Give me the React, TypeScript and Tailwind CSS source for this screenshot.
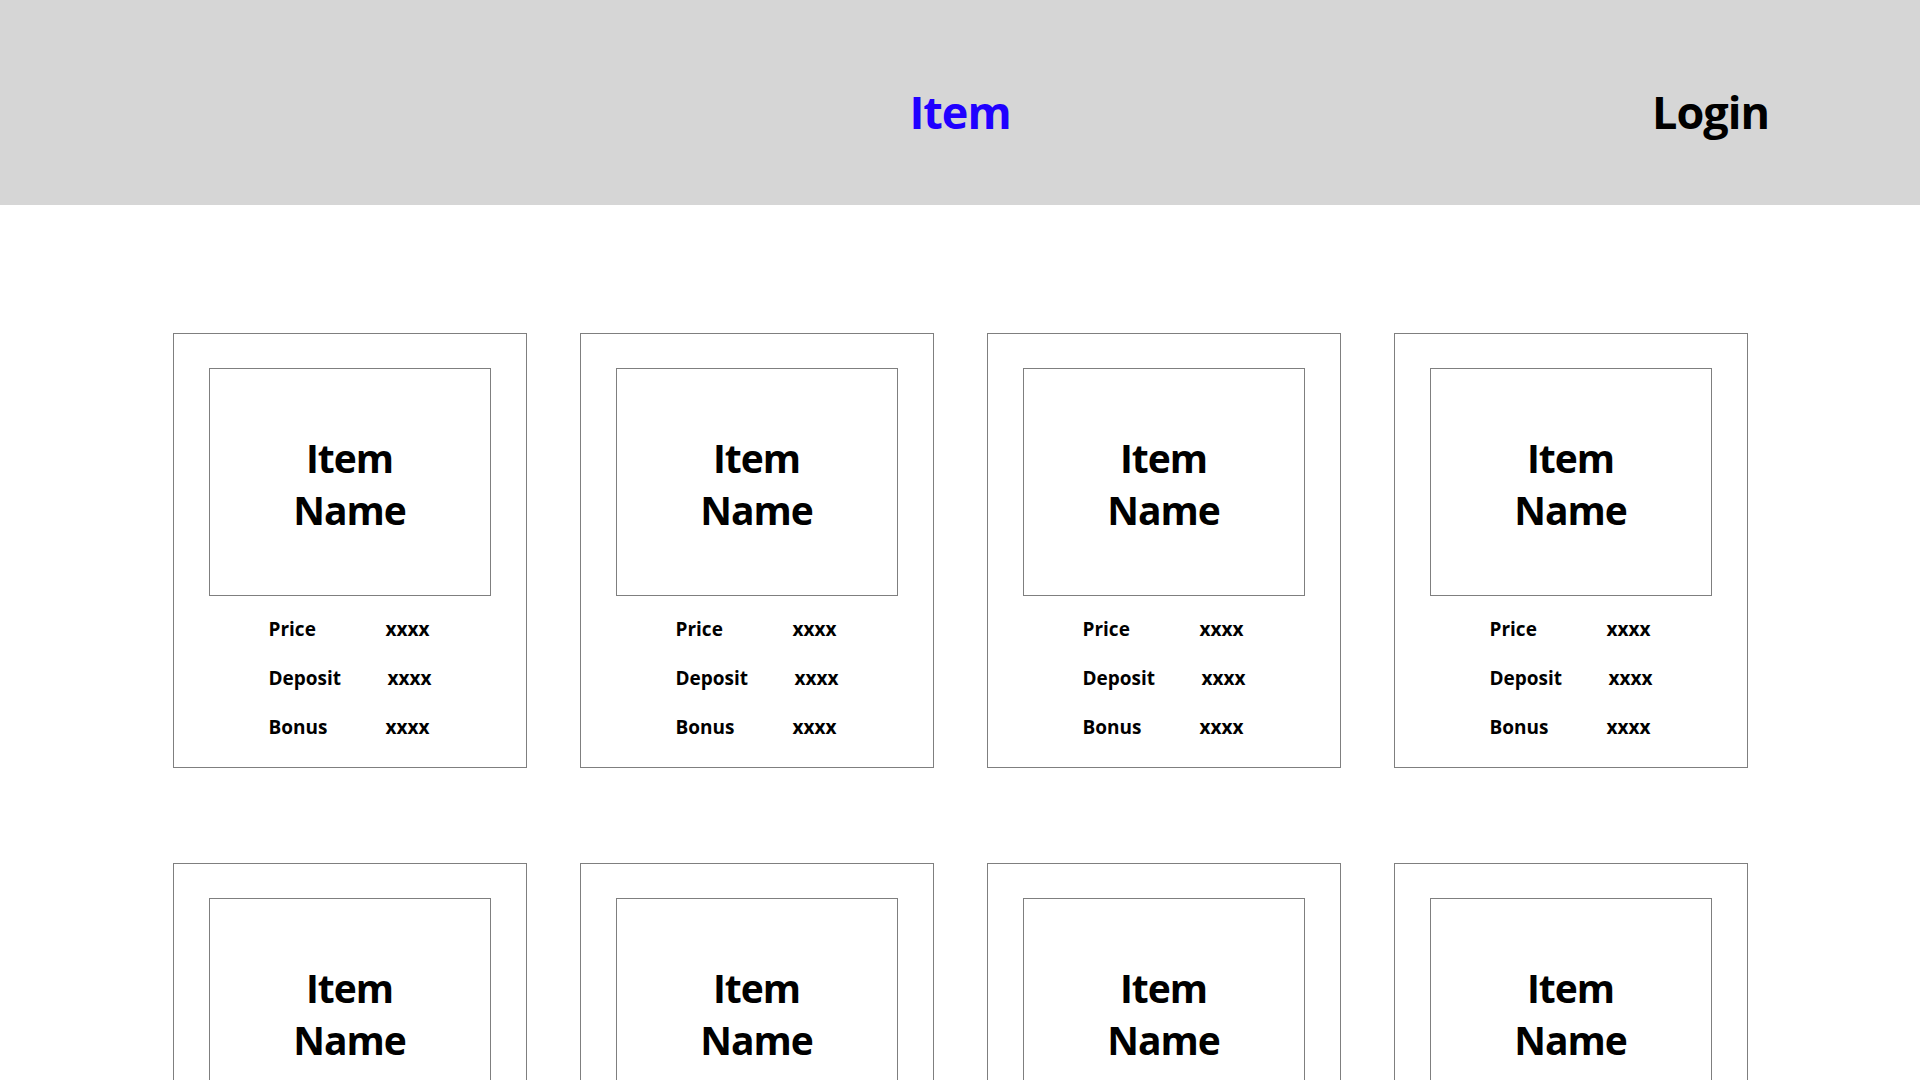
const items = Array.from({ length: 8 }, (_, i) => i);

function ItemCard() {
  return (
    <div className="w-[354px] h-[435px] border border-[#7f7f7f] px-[35px] pt-[34px]">
      <div className="w-[282px] h-[228px] border border-[#7f7f7f] flex items-center justify-center">
        <div className="pt-[4px] text-[39px] leading-[52px] tracking-[-1px] font-bold text-center text-black">
          Item
          <br />
          Name
        </div>
      </div>
      <div className="mt-[21px] pl-[60px] text-[19px] leading-[24px] font-bold text-black">
        <div className="flex h-[49px]">
          <span className="w-[117px]">Price</span>
          <span>xxxx</span>
        </div>
        <div className="flex h-[49px]">
          <span className="w-[119px]">Deposit</span>
          <span>xxxx</span>
        </div>
        <div className="flex h-[49px]">
          <span className="w-[117px]">Bonus</span>
          <span>xxxx</span>
        </div>
      </div>
    </div>
  );
}

export default function App() {
  return (
    <div className="min-h-screen bg-white font-['Open_Sans',sans-serif]">
      <header className="h-[205px] bg-[#d6d6d6] grid grid-cols-[1fr_auto_1fr] items-center pt-[18px]">
        <div />
        <a className="text-[45px] tracking-[-1px] font-bold text-[#2000ff]">Item</a>
        <a className="justify-self-end pr-[151px] text-[45px] tracking-[-1px] font-bold text-black">Login</a>
      </header>
      <main className="pt-[128px] pb-[120px]">
        <div className="w-[1575px] mx-auto grid grid-cols-4 gap-x-[53px] gap-y-[95px]">
          {items.map((i) => (
            <ItemCard key={i} />
          ))}
        </div>
      </main>
    </div>
  );
}
